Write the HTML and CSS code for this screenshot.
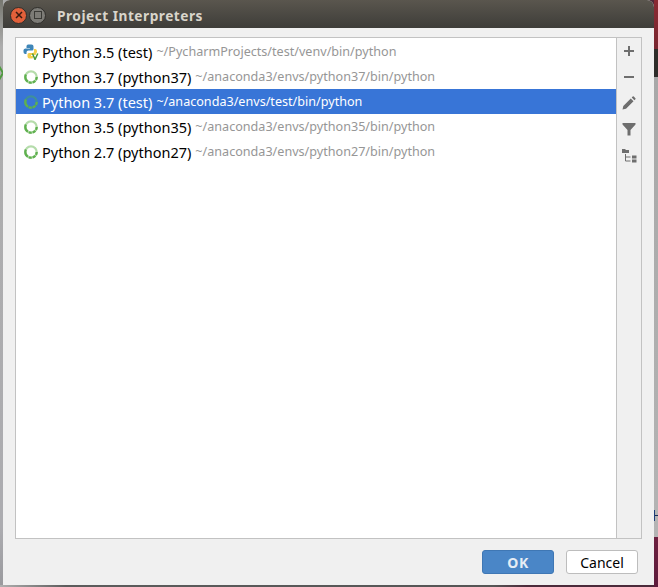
FILE: index.html
```html
<!DOCTYPE html>
<html lang="en">
<head>
<meta charset="utf-8">
<title>Project Interpreters</title>
<link rel="stylesheet" href="styles.css">
</head>
<body>
<div class="desk-left"><svg class="desk-chevron" width="4" height="16" viewBox="0 0 4 16"><path d="M-1 1l4 7-4 7" fill="none" stroke="#4f9a3f" stroke-width="2"/></svg></div>
<div class="desk-right"><span class="desk-glyph"></span></div>
<main class="window">
  <header class="titlebar">
    <button class="wbtn wbtn-close" aria-label="Close"><svg width="8" height="8" viewBox="0 0 8 8"><path d="M1 1l6 6M7 1L1 7" stroke="#3a1a10" stroke-width="1.5"/></svg></button>
    <button class="wbtn wbtn-max" aria-label="Maximize"><span class="wbtn-square"></span></button>
    <h1 class="title">Project Interpreters</h1>
  </header>
  <div class="content">
    <section class="panel">
      <ul class="list">
        <li class="row">
          <svg class="ico" width="16" height="16" viewBox="0 0 16 16"><path d="M5 0.500h3.500a2 2 0 0 1 2 2V5a1.500 1.500 0 0 1-1.500 1.500H5.500A2 2 0 0 0 3.500 8.500V10H2a2 2 0 0 1-1.500-2V6A2 2 0 0 1 2.500 4.500H7V4H3.500V2A2 2 0 0 1 5 0.500z" fill="#3f86b8"/><path d="M11 5h1.500A2 2 0 0 1 14 7v1l-1.500 3H8v1h2.500l-1 2.500H6.500A2 2 0 0 1 4.500 12.500V10.500A1.500 1.500 0 0 1 6 9h3.500a1.500 1.500 0 0 0 1.500-1.500z" fill="#f5cf4a"/><path d="M9.500 9.500l2.500 6 2.800-6" fill="none" stroke="#4c9a3c" stroke-width="1.500"/></svg>
          <span class="name">Python 3.5 (test)</span> <span class="path">~/PycharmProjects/test/venv/bin/python</span>
        </li>
        <li class="row">
          <svg class="ico" width="16" height="16" viewBox="0 0 16 16"><circle class="ring" cx="8" cy="8" r="5.700"/><circle class="ring-on" cx="8" cy="8" r="5.700"/></svg>
          <span class="name">Python 3.7 (python37)</span> <span class="path">~/anaconda3/envs/python37/bin/python</span>
        </li>
        <li class="row row-selected">
          <svg class="ico" width="16" height="16" viewBox="0 0 16 16"><circle class="ring" cx="8" cy="8" r="5.700"/><circle class="ring-on" cx="8" cy="8" r="5.700"/></svg>
          <span class="name">Python 3.7 (test)</span> <span class="path">~/anaconda3/envs/test/bin/python</span>
        </li>
        <li class="row">
          <svg class="ico" width="16" height="16" viewBox="0 0 16 16"><circle class="ring" cx="8" cy="8" r="5.700"/><circle class="ring-on" cx="8" cy="8" r="5.700"/></svg>
          <span class="name">Python 3.5 (python35)</span> <span class="path">~/anaconda3/envs/python35/bin/python</span>
        </li>
        <li class="row">
          <svg class="ico" width="16" height="16" viewBox="0 0 16 16"><circle class="ring" cx="8" cy="8" r="5.700"/><circle class="ring-on" cx="8" cy="8" r="5.700"/></svg>
          <span class="name">Python 2.7 (python27)</span> <span class="path">~/anaconda3/envs/python27/bin/python</span>
        </li>
      </ul>
      <aside class="tools">
        <span class="slot"><svg width="12" height="12" viewBox="0 0 12 12"><path d="M5 1h2v4h4v2H7v4H5V7H1V5h4z" fill="#6e6e6e"/></svg></span>
        <span class="slot"><svg width="12" height="12" viewBox="0 0 12 12"><path d="M1 5h10v2H1z" fill="#6e6e6e"/></svg></span>
        <span class="slot"><svg width="14" height="14" viewBox="0 0 14 14"><path d="M0.500 13.500l0.800-3.500 7.500-7.500 2.700 2.700-7.500 7.500zM9.700 1.600l1-1a0.800 0.800 0 0 1 1.100 0l1.600 1.600a0.800 0.800 0 0 1 0 1.100l-1 1z" fill="#6e6e6e"/></svg></span>
        <span class="slot"><svg width="14" height="14" viewBox="0 0 14 14"><path d="M0.500 1h13v1.500L8.500 8v5.500h-3V8L0.500 2.500z" fill="#6e6e6e"/></svg></span>
        <span class="slot"><svg width="15" height="15" viewBox="0 0 15 15"><path d="M0 1h3l1 1h3v3H0z" fill="#6e6e6e"/><path d="M3.500 6v7h5M3.500 9h5" fill="none" stroke="#6e6e6e"/><path d="M10 7.500h4.500v3H10zM10 11.500h4.500v3H10z" fill="#6e6e6e"/></svg></span>
      </aside>
    </section>
    <footer class="actions">
      <button class="btn btn-primary">OK</button>
      <button class="btn">Cancel</button>
    </footer>
  </div>
</main>
</body>
</html>
```
FILE: styles.css
```css
* { box-sizing: border-box; }
html, body { margin: 0; height: 100%; }
body {
  width: 658px;
  height: 587px;
  overflow: hidden;
  position: relative;
  background: linear-gradient(90deg, #b0b0b0, #5c5c5c 10%, #555 75%, #4b2a3a 80%);
  font-family: "Noto Sans", sans-serif;
  padding: 0 4px 2px 3px;
}
.desk-left {
  position: absolute;
  left: 0; top: 0; bottom: 2px;
  width: 3px;
  background: linear-gradient(#77776f, #adadad 8%, #acacb0 90%, #9a9a9e);
  overflow: hidden;
}
.desk-chevron {
  position: absolute;
  left: 0; top: 65px;
}
.desk-right {
  position: absolute;
  right: 0; top: 0; bottom: 0;
  width: 4px;
  background: linear-gradient(#8a2a33 0, #7a2630 49px, #2e2d2a 49px, #2e2d2a 77px, #a8a8a8 77px, #b4b4b4 537px, #6d2040 537px, #5d1b3b 100%);
  overflow: hidden;
}
.desk-glyph {
  position: absolute;
  left: 0; top: 510px;
  width: 4px;
  height: 11px;
  background: linear-gradient(#1c3c78, #1c3c78) 0 0 / 1px 100% no-repeat, linear-gradient(#1c2c58, #1c2c58) 0 5px / 100% 1px no-repeat;
}
.window {
  position: relative;
  height: 585px;
  display: flex;
  flex-direction: column;
  border-radius: 7px 7px 0 0;
  overflow: hidden;
  background: #f0f0f0;
}
.titlebar {
  display: flex;
  align-items: center;
  height: 28px;
  flex: none;
  padding: 2px 0 0 7px;
  background: linear-gradient(#5a564e, #3e3d39);
}
.wbtn {
  width: 17px;
  height: 17px;
  border-radius: 50%;
  padding: 0;
  display: flex;
  align-items: center;
  justify-content: center;
}
.wbtn-close { background: #e2603a; border: 1px solid #2f2e2b; }
.wbtn-max { background: #7c7b76; border: 1px solid #2f2e2b; margin-left: 2px; }
.wbtn-square { width: 8px; height: 8px; border: 1px solid #3a3a36; }
.title {
  margin: 0 0 0 11px;
  font-size: 13.700px;
  font-weight: 700;
  letter-spacing: 0.500px;
  color: #d9d5cb;
}
.content {
  flex: 1;
  display: flex;
  flex-direction: column;
  padding: 9px 12px 11px 12px;
  min-height: 0;
}
.panel {
  height: 502px;
  flex: none;
  display: flex;
  border: 1px solid #c2c2c2;
  background: #fff;
}
.list {
  flex: 1;
  margin: 0;
  padding: 1px 0 0;
  list-style: none;
}
.row {
  display: flex;
  align-items: center;
  height: 25px;
  padding-left: 7px;
  font-size: 14.500px;
  white-space: pre;
  color: #000;
}
.row-selected { background: #3875d7; color: #fff; }
.ico { flex: none; margin-right: 3px; }
.name { margin-right: 4px; }
.path { font-size: 12.600px; color: #969696; }
.row-selected .path { color: #fff; }
.ring { fill: none; stroke: #b5dcab; stroke-width: 2.300; }
.ring-on {
  fill: none;
  stroke: #5fb04f;
  stroke-width: 2.300;
  stroke-dasharray: 3 1 3 1 3 1 8 16;
}
.row-selected .ring { stroke: #3f8f9a; }
.tools {
  width: 25px;
  flex: none;
  border-left: 1px solid #c2c2c2;
  background: #f0f0f0;
  display: flex;
  flex-direction: column;
}
.slot {
  height: 26px;
  flex: none;
  display: flex;
  align-items: center;
  justify-content: center;
}
.actions {
  flex: 1;
  display: flex;
  justify-content: flex-end;
  align-items: flex-start;
  gap: 12px;
  padding: 11px 4px 0 0;
}
.btn {
  width: 72px;
  height: 24px;
  padding: 0;
  border: 1px solid #bdbdbd;
  border-radius: 3px;
  background: #fff;
  font-family: inherit;
  font-size: 14px;
  color: #000;
}
.btn-primary {
  border-color: #3f77b4;
  background: #4a86c7;
  color: #e6edf5;
  font-weight: 700;
  letter-spacing: 0.500px;
}
```
